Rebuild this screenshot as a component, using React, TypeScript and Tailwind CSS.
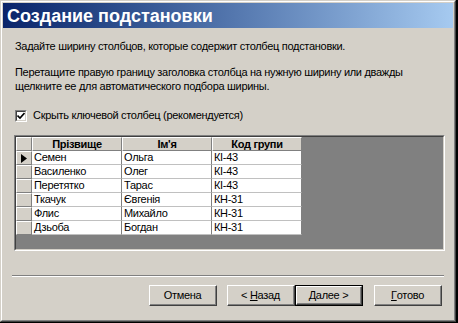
import React from "react";

const rows = [
  ["Семен", "Ольга", "КІ-43"],
  ["Василенко", "Олег", "КІ-43"],
  ["Перетятко", "Тарас", "КІ-43"],
  ["Ткачук", "Євгенія", "КН-31"],
  ["Флис", "Михайло", "КН-31"],
  ["Дзьоба", "Богдан", "КН-31"],
];

const raised =
  "border-t border-l border-t-white border-l-white border-r border-b border-r-[#808080] border-b-[#808080]";

const WinButton = ({
  children,
  isDefault,
}: {
  children: React.ReactNode;
  isDefault?: boolean;
}) => (
  <div className={`w-[68px] h-[21px] flex ${isDefault ? "border border-black" : ""}`}>
    <div className="flex-1 flex border-t border-l border-t-white border-l-white border-r border-b border-r-[#404040] border-b-[#404040]">
      <div className="flex-1 border-r border-b border-r-[#808080] border-b-[#808080] flex items-center justify-center text-[11px] tracking-[-0.3px] text-black">
        {children}
      </div>
    </div>
  </div>
);

export default function App() {
  return (
    <div
      className="w-[458px] h-[323px] bg-black"
      style={{ fontFamily: '"Liberation Sans", Arial, sans-serif' }}
    >
      <div className="w-[456px] h-[322px] border border-t-[#d4d0c8] border-l-[#d4d0c8] border-r-[#404040] border-b-[#404040]">
        <div className="h-full border border-t-white border-l-white border-r-[#808080] border-b-[#808080] bg-[#d4d0c8] p-px flex flex-col">
          {/* Title bar */}
          <div className="h-[25px] bg-gradient-to-r from-[#0a246a] to-[#a6caf0] flex items-center pl-[4px]">
            <span className="text-white font-bold text-[18px] leading-none">
              Создание подстановки
            </span>
          </div>

          {/* Body */}
          <div className="flex flex-col px-[12px] text-[11px] leading-[13px] tracking-[-0.3px] text-black">
            <p className="mt-[12px]">
              Задайте ширину столбцов, которые содержит столбец подстановки.
            </p>
            <p className="mt-[12px] leading-[14px]">
              Перетащите правую границу заголовка столбца на нужную ширину или дважды
              <br />
              щелкните ее для автоматического подбора ширины.
            </p>
            <div className="mt-[16px] flex items-center gap-[6px]">
              <div className="w-[12px] h-[12px] border-t border-l border-t-[#808080] border-l-[#808080] border-r border-b border-r-white border-b-white">
                <div className="w-full h-full border border-t-[#404040] border-l-[#404040] border-r-[#d4d0c8] border-b-[#d4d0c8] bg-white flex items-center justify-center">
                  <svg width="8" height="8" viewBox="0 0 8 8">
                    <path d="M0.5 3.5 L3 6 L7.5 1" stroke="black" strokeWidth="1.6" fill="none" />
                  </svg>
                </div>
              </div>
              <span>Скрыть ключевой столбец (рекомендуется)</span>
            </div>

            {/* Datasheet */}
            <div className="mt-[13px] -ml-px w-[431px] h-[116px] border-t border-l border-t-[#808080] border-l-[#808080] border-r border-b border-r-white border-b-white">
              <div className="w-full h-full border border-t-[#404040] border-l-[#404040] border-r-[#d4d0c8] border-b-[#d4d0c8] bg-[#808080]">
                <div className="flex h-[14px]">
                  <div className={`w-[16px] bg-[#d4d0c8] ${raised}`} />
                  {["Прізвище", "Ім'я", "Код групи"].map((h) => (
                    <div
                      key={h}
                      className={`w-[90px] bg-[#d4d0c8] ${raised} flex items-center justify-center font-bold text-[11px] leading-none`}
                    >
                      {h}
                    </div>
                  ))}
                </div>
                {rows.map((r, i) => (
                  <div key={i} className="flex h-[14px]">
                    <div className={`w-[16px] bg-[#d4d0c8] ${raised} flex items-center justify-center`}>
                      {i === 0 && (
                        <svg width="6" height="9" viewBox="0 0 6 9">
                          <path d="M0 0 L6 4.5 L0 9 Z" fill="black" />
                        </svg>
                      )}
                    </div>
                    {r.map((c, j) => (
                      <div
                        key={j}
                        className="w-[90px] bg-white border-r border-b border-r-[#808080] border-b-[#c0c0c0] pl-[2px] flex items-center text-[11px] leading-none"
                      >
                        {c}
                      </div>
                    ))}
                  </div>
                ))}
              </div>
            </div>

            {/* Separator */}
            <div className="mt-[24px] -mx-[3px] border-t border-t-[#808080] border-b border-b-white" />

            {/* Buttons */}
            <div className="mt-[8px] flex justify-end -mr-[1px]">
              <WinButton>Отмена</WinButton>
              <div className="w-[10px]" />
              <WinButton>
                &lt;&nbsp;<span className="underline">Н</span>азад
              </WinButton>
              <WinButton isDefault>
                <span className="underline">Д</span>алее &gt;
              </WinButton>
              <div className="w-[11px]" />
              <WinButton>
                <span className="underline">Г</span>отово
              </WinButton>
            </div>
          </div>
        </div>
      </div>
    </div>
  );
}
